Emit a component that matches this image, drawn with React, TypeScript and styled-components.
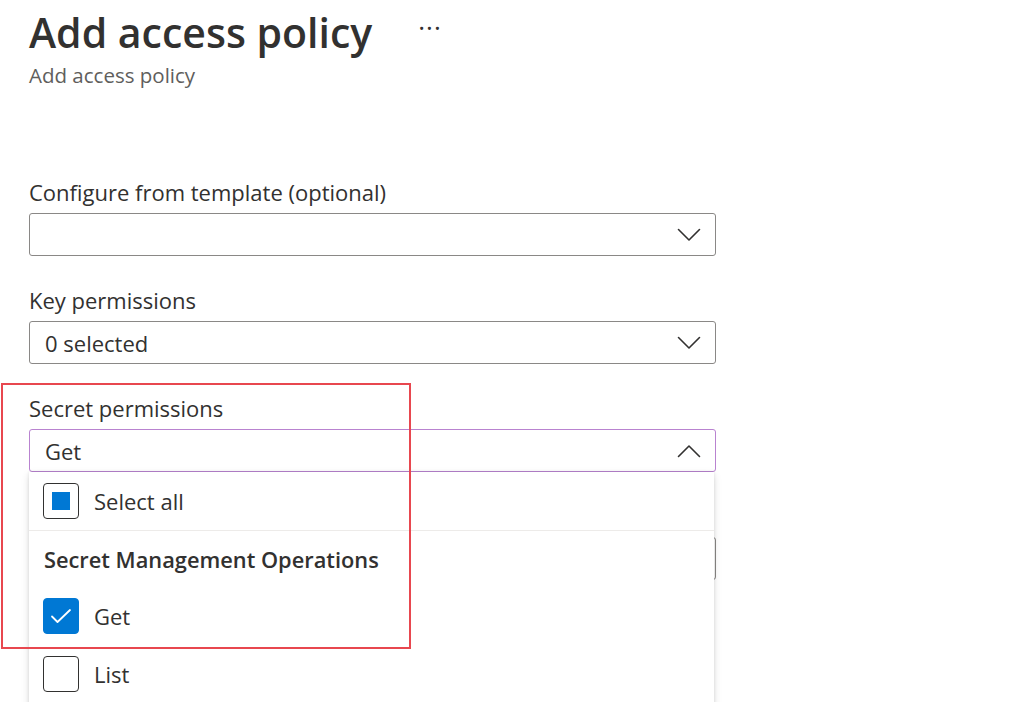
import React from "react";
import styled, { createGlobalStyle } from "styled-components";

const Global = createGlobalStyle`
  html, body { margin: 0; padding: 0; background: #ffffff; }
  body { font-family: "Open Sans", "Noto Sans", "Liberation Sans", sans-serif; color: #323130; overflow: hidden; }
`;

const Page = styled.div`
  position: relative;
  width: 1024px;
  height: 702px;
  overflow: hidden;
  padding: 0 0 0 29px;
  box-sizing: border-box;
`;

const Header = styled.div`
  display: flex;
  align-items: center;
  gap: 46px;
  height: 64px;
`;

const Title = styled.h1`
  margin: 0;
  font-size: 41px;
  font-weight: 600;
  color: #323130;
  line-height: 64px;
`;

const More = styled.span`
  font-size: 26px;
  letter-spacing: 1px;
  color: #323130;
  margin-top: -10px;
`;

const Subtitle = styled.div`
  font-size: 20.5px;
  color: #605e5c;
  line-height: 24px;
  margin-top: -1px;
`;

const Form = styled.div`
  display: flex;
  flex-direction: column;
  gap: 32px;
  width: 687px;
  margin-top: 93px;
`;

const Field = styled.div`
  position: relative;
  display: flex;
  flex-direction: column;
  gap: 8px;
`;

const Label = styled.label<{ $hidden?: boolean }>`
  font-size: 22px;
  line-height: 25px;
  color: #323130;
  visibility: ${(p) => (p.$hidden ? "hidden" : "visible")};
`;

const Select = styled.div<{ $open?: boolean }>`
  box-sizing: border-box;
  height: 43px;
  border: 1px solid ${(p) => (p.$open ? "#b983d0" : "#8a8886")};
  border-radius: 3px;
  display: flex;
  align-items: center;
  justify-content: space-between;
  padding: 0 14px 0 15px;
  font-size: 22px;
  color: #323130;
  background: #fff;
`;

const Panel = styled.div`
  position: absolute;
  left: 0;
  right: 2px;
  top: 100%;
  height: 260px;
  background: #ffffff;
  box-shadow: 0 3px 8px rgba(0, 0, 0, 0.13), 0 0 3px rgba(0, 0, 0, 0.1);
  z-index: 2;
`;

const OptionRow = styled.div`
  display: flex;
  align-items: center;
  gap: 15px;
  height: 58px;
  padding-left: 14px;
  font-size: 22px;
  color: #323130;
`;

const Divider = styled.div`
  height: 1px;
  background: #edebe9;
`;

const GroupHeading = styled.div`
  height: 56px;
  display: flex;
  align-items: center;
  padding-left: 15px;
  font-size: 21.8px;
  font-weight: 600;
  color: #323130;
`;

const Box = styled.span<{ $checked?: boolean }>`
  box-sizing: border-box;
  width: 36px;
  height: 36px;
  border-radius: 4px;
  border: 1.5px solid ${(p) => (p.$checked ? "#0078d4" : "#323130")};
  background: ${(p) => (p.$checked ? "#0078d4" : "#ffffff")};
  display: flex;
  align-items: center;
  justify-content: center;
  flex: none;
`;

const Mixed = styled.span`
  width: 18px;
  height: 18px;
  background: #0078d4;
`;

const Highlight = styled.div`
  position: absolute;
  left: 1px;
  top: 383px;
  width: 410px;
  height: 266px;
  box-sizing: border-box;
  border: 2px solid #e8474f;
  pointer-events: none;
  z-index: 3;
`;

const Chevron = ({ up }: { up?: boolean }) => (
  <svg width="24" height="14" viewBox="0 0 24 14" fill="none">
    <path
      d={up ? "M1.5 12.5 L12 2 L22.5 12.5" : "M1.5 1.5 L12 12 L22.5 1.5"}
      stroke="#323130"
      strokeWidth="1.6"
      strokeLinecap="round"
      strokeLinejoin="round"
    />
  </svg>
);

const Check = () => (
  <svg width="22" height="16" viewBox="0 0 22 16" fill="none">
    <path d="M2 8.5 L7.5 14 L20 2" stroke="#ffffff" strokeWidth="1.8" strokeLinecap="round" strokeLinejoin="round" />
  </svg>
);

export default function App() {
  return (
    <>
      <Global />
      <Page>
        <Header>
          <Title>Add access policy</Title>
          <More>···</More>
        </Header>
        <Subtitle>Add access policy</Subtitle>
        <Form>
          <Field>
            <Label>Configure from template (optional)</Label>
            <Select>
              <span />
              <Chevron />
            </Select>
          </Field>
          <Field>
            <Label>Key permissions</Label>
            <Select>
              <span>0 selected</span>
              <Chevron />
            </Select>
          </Field>
          <Field>
            <Label>Secret permissions</Label>
            <Select $open>
              <span>Get</span>
              <Chevron up />
            </Select>
            <Panel>
              <OptionRow>
                <Box>
                  <Mixed />
                </Box>
                Select all
              </OptionRow>
              <Divider />
              <GroupHeading>Secret Management Operations</GroupHeading>
              <OptionRow>
                <Box $checked>
                  <Check />
                </Box>
                Get
              </OptionRow>
              <OptionRow>
                <Box />
                List
              </OptionRow>
            </Panel>
          </Field>
          <Field>
            <Label $hidden>Certificate permissions</Label>
            <Select>
              <span />
              <Chevron />
            </Select>
          </Field>
        </Form>
        <Highlight />
      </Page>
    </>
  );
}
